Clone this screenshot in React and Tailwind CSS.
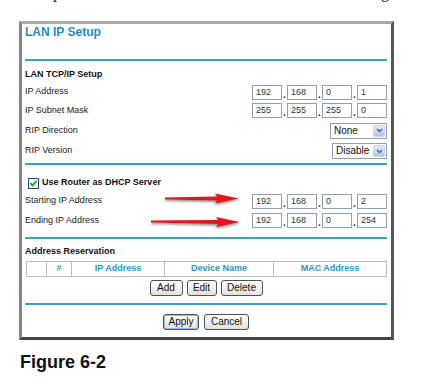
const sans = "font-['Liberation_Sans',Arial,sans-serif]";

const IpBox = ({ value }) => (
  <div className="w-[30px] h-[15px] border border-[#8e9fb6] bg-white pl-[3px] text-[9px] leading-[13px] text-[#333]">
    {value}
  </div>
);

const IpGroup = ({ parts }) => (
  <div className="flex items-end">
    {parts.map((p, i) => (
      <div key={i} className="flex items-end">
        {i > 0 && <span className="w-[5px] text-center text-[10px] font-bold leading-[10px] text-[#333]">.</span>}
        <IpBox value={p} />
      </div>
    ))}
  </div>
);

const Select = ({ value, width }) => (
  <div className={`${width} h-[16px] border border-[#8e9fb6] bg-white flex items-center`}>
    <span className="flex-1 pl-[3px] text-[10px] leading-[14px] text-[#111]">{value}</span>
    <div className="w-[12px] h-[12px] mr-[1px] rounded-[1px] border border-[#c5d4f5] bg-linear-to-b from-[#e3ebfd] to-[#b4c6ee] flex items-center justify-center">
      <svg width="7" height="5" viewBox="0 0 7 5">
        <path d="M1 1 L3.5 3.5 L6 1" stroke="#4d6185" strokeWidth="1.4" fill="none" />
      </svg>
    </div>
  </div>
);

const Row = ({ label, h, children }) => (
  <div className={`flex items-center justify-between ${h}`}>
    <span className="text-[9px] text-[#222]">{label}</span>
    {children}
  </div>
);

const Btn = ({ children, w, primary }) => (
  <button
    className={`${w} h-[16px] rounded-[3px] border border-[#505050] bg-linear-to-b from-white to-[#e2e2da] text-[10px] leading-[14px] text-[#111] ${
      primary ? "shadow-[inset_0_0_0_1px_#9ab8ec]" : ""
    }`}
  >
    {children}
  </button>
);

const Line = ({ className }) => <div className={`h-[2px] bg-[#3aa1c4] ${className}`} />;

export default function App() {
  return (
    <div className={`relative w-[428px] h-[381px] bg-white overflow-hidden ${sans}`}>
      {/* clipped line of the page text above */}
      <div className="h-[4px] overflow-hidden">
        <div className="flex justify-between mt-[-16px] leading-[18px] text-[16px] font-['Liberation_Serif',serif] text-[#111]">
          <span className="ml-[45px]">up</span>
          <span className="mr-[39px]">g</span>
        </div>
      </div>

      <div className="mt-[17px] ml-[19px] w-[375px] border-t-[3px] border-t-[#a9a9a9] border-l-[3px] border-l-[#858585] border-r-[3px] border-r-[#555] border-b-[3px] border-b-[#444] bg-white pl-[3px] pr-[4px]">
        <div className="pt-[1px] text-[12px] leading-[14px] font-bold text-[#1f8dc0]">LAN IP Setup</div>
        <Line className="mt-[20px]" />

        <div className="mt-[6px] h-[16px] flex items-center text-[9px] font-bold text-[#111]">LAN TCP/IP Setup</div>
        <Row label="IP Address" h="h-[18px]">
          <IpGroup parts={["192", "168", "0", "1"]} />
        </Row>
        <Row label="IP Subnet Mask" h="h-[19px]">
          <IpGroup parts={["255", "255", "255", "0"]} />
        </Row>
        <Row label="RIP Direction" h="h-[21px]">
          <Select value="None" width="w-[57px]" />
        </Row>
        <Row label="RIP Version" h="h-[20px]">
          <Select value="Disable" width="w-[55px]" />
        </Row>
        <Line className="mt-[2px]" />

        <div className="mt-[9px] h-[18px] flex items-center gap-[3px] pl-[3px]">
          <svg width="11" height="11" viewBox="0 0 11 11">
            <rect x="0.5" y="0.5" width="10" height="10" fill="#f4f4f0" stroke="#1c5180" />
            <path d="M2.5 5.2 L4.5 7.4 L8.6 3" stroke="#21a121" strokeWidth="1.8" fill="none" />
          </svg>
          <span className="text-[9px] font-bold text-[#111]">Use Router as DHCP Server</span>
        </div>
        <Row label="Starting IP Address" h="h-[18px]">
          <IpGroup parts={["192", "168", "0", "2"]} />
        </Row>
        <Row label="Ending IP Address" h="h-[21px]">
          <IpGroup parts={["192", "168", "0", "254"]} />
        </Row>
        <Line className="mt-[6px]" />

        <div className="mt-[6px] h-[14px] flex items-center text-[9px] font-bold text-[#111]">Address Reservation</div>
        <div className="mt-[2px] ml-[1px] h-[16px] grid grid-cols-[19px_25px_93px_109px_1fr] border border-[#bdbdbd] text-[9px] font-bold text-[#2a97c4]">
          <div />
          <div className="border-l border-[#bdbdbd] flex items-center justify-center">#</div>
          <div className="border-l border-[#bdbdbd] flex items-center justify-center">IP Address</div>
          <div className="border-l border-[#bdbdbd] flex items-center justify-center">Device Name</div>
          <div className="border-l border-[#bdbdbd] flex items-center justify-center">MAC Address</div>
        </div>
        <div className="mt-[3px] flex justify-center gap-[4px]">
          <Btn w="w-[33px]">Add</Btn>
          <Btn w="w-[30px]">Edit</Btn>
          <Btn w="w-[42px]">Delete</Btn>
        </div>
        <Line className="mt-[7px]" />

        <div className="mt-[9px] mb-[7px] flex justify-center gap-[5px]">
          <Btn w="w-[36px]" primary>Apply</Btn>
          <Btn w="w-[45px]">Cancel</Btn>
        </div>
      </div>

      <div className="mt-[12px] ml-[20px] text-[18px] leading-[20px] font-bold text-[#111]">Figure 6-2</div>

      {/* red annotation arrows */}
      <svg className="absolute left-0 top-0 pointer-events-none" width="428" height="381" viewBox="0 0 428 381">
        <defs>
          <filter id="sh" x="-10%" y="-50%" width="120%" height="200%">
            <feDropShadow dx="0" dy="1.5" stdDeviation="1" floodColor="#555" floodOpacity="0.7" />
          </filter>
        </defs>
        <polygon
          filter="url(#sh)"
          fill="#e3161b"
          points="165,197.6 217,196.6 215,193.5 239,198.5 215,203.5 217,200.4 165,199.4"
        />
        <polygon
          filter="url(#sh)"
          fill="#e3161b"
          points="151,220.6 218,220 216,217 240,222 216,227 218,223.9 151,222.4"
        />
      </svg>
    </div>
  );
}
